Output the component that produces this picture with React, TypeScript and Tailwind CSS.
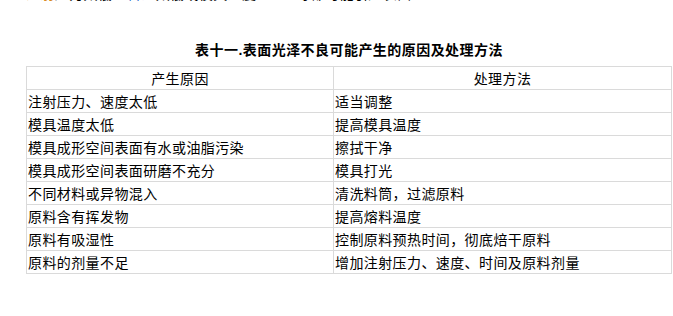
import React from 'react';

const rows: [string, string][] = [
  ['注射压力、速度太低', '适当调整'],
  ['模具温度太低', '提高模具温度'],
  ['模具成形空间表面有水或油脂污染', '擦拭干净'],
  ['模具成形空间表面研磨不充分', '模具打光'],
  ['不同材料或异物混入', '清洗料筒，过滤原料'],
  ['原料含有挥发物', '提高熔料温度'],
  ['原料有吸湿性', '控制原料预热时间，彻底焙干原料'],
  ['原料的剂量不足', '增加注射压力、速度、时间及原料剂量'],
];

const App: React.FC = () => {
  return (
    <div
      className="w-[673px] h-[316px] bg-white text-black overflow-hidden"
      style={{ fontFamily: '"Liberation Sans", "Noto Sans CJK SC", sans-serif' }}
    >
      {/* cut-off line from the previous paragraph */}
      <div className="h-[2px] overflow-hidden pl-[26px]">
        <div className="-mt-[15px] text-[14px] leading-[18px] tracking-[0.4px] whitespace-nowrap">
          <span className="text-[#d98a1c]">注射</span>
          <span>压力太低、</span>
          <span className="text-[#2266cc]">料温</span>
          <span>太低或模具温度</span>
          <span className="ml-[40px]">等都可能引起表面</span>
        </div>
      </div>

      <div className="pl-[26px] pr-px">
        {/* Title */}
        <div className="mt-[39px] h-[25px] text-center text-[14px] leading-[18px] font-bold tracking-[0.45px]">
          表十一.表面光泽不良可能产生的原因及处理方法
        </div>

        {/* Table */}
        <table className="w-[646px] border-collapse text-[14px] tracking-[0.4px] leading-[16px]">
          <colgroup>
            <col className="w-[307px]" />
            <col />
          </colgroup>
          <thead>
            <tr className="h-[23px]">
              <th className="border border-[#dadada] font-normal text-center align-middle pt-[2px]">产生原因</th>
              <th className="border border-[#dadada] font-normal text-center align-middle pt-[2px]">处理方法</th>
            </tr>
          </thead>
          <tbody>
            {rows.map(([cause, fix]) => (
              <tr key={cause} className="h-[23px]">
                <td className="border border-[#dadada] align-middle pt-[2px] pl-px whitespace-nowrap">{cause}</td>
                <td className="border border-[#dadada] align-middle pt-[2px] pl-px whitespace-nowrap">{fix}</td>
              </tr>
            ))}
          </tbody>
        </table>
      </div>
    </div>
  );
};

export default App;
